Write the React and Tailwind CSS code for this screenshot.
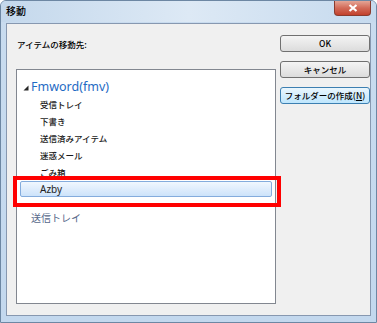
const jp = { fontFamily: '"Noto Sans CJK JP", "Noto Sans", sans-serif' };

const FolderItem = ({ children }) => (
  <div className="h-[17px] pl-[23px] flex items-center text-[8.5px] font-medium text-[#1a1a1a]">{children}</div>
);

const DialogButton = ({ children, focused }) => (
  <div
    className={
      'h-[17px] w-[90px] flex items-center justify-center rounded-[3px] border text-[8.5px] font-medium text-black ' +
      (focused
        ? 'border-[#3c7fb1] bg-gradient-to-b from-[#eaf6fd] to-[#bee6fd]'
        : 'border-[#707070] bg-gradient-to-b from-[#f4f4f4] to-[#dcdcdc]')
    }
  >
    {children}
  </div>
);

export default function App() {
  return (
    <div
      className="relative w-[377px] h-[323px] flex flex-col bg-gradient-to-b from-[#c9dcef] to-[#c3d8ee] border border-[#6d87a3] rounded-t-[6px] overflow-hidden"
      style={jp}
    >
      {/* Title bar */}
      <div className="h-[21px] flex items-start justify-between bg-gradient-to-r from-[#c4d8ec] via-[#dde9f5] to-[#c6daee]">
        <div className="pl-[5px] pt-[4px] text-[10px] leading-[12px] font-medium text-black">移動</div>
        <div className="mr-[5px] w-[37px] h-[15px] rounded-b-[4px] border border-t-0 border-[#8a3b2e] bg-gradient-to-b from-[#e4a596] via-[#d26a58] to-[#c2402c] flex items-center justify-center">
          <svg width="10" height="8" viewBox="0 0 10 8">
            <path d="M1.5 1 L8.5 7 M8.5 1 L1.5 7" stroke="#fff" strokeWidth="2.2" />
          </svg>
        </div>
      </div>

      {/* Content panel */}
      <div className="flex-1 mx-[5px] mt-[1px] mb-[6px] border border-[#8798b0] bg-[#f0f0f0] flex">
        <div className="pl-[9px] pt-[12px] flex flex-col">
          <div className="h-[16px] flex items-center pl-[1px] text-[8.5px] font-medium text-black">アイテムの移動先:</div>
          <div className="mt-[17px] w-[260px] h-[235px] border border-[#828790] bg-white pt-[9px]">
            <div className="h-[17px] flex items-center pl-[6px]">
              <svg width="6" height="6" viewBox="0 0 6 6" className="mr-[2px]">
                <path d="M5.5 0.5 L5.5 5.5 L0.5 5.5 Z" fill="#262626" />
              </svg>
              <span className="text-[12.5px] text-[#1f6bc4]" style={{ fontFamily: '"Noto Sans", sans-serif' }}>
                Fmword(fmv)
              </span>
            </div>
            <FolderItem>受信トレイ</FolderItem>
            <FolderItem>下書き</FolderItem>
            <FolderItem>送信済みアイテム</FolderItem>
            <FolderItem>迷惑メール</FolderItem>
            <FolderItem>ごみ箱</FolderItem>
            <div className="ml-[3px] w-[252px] h-[16px] rounded-[2px] border border-[#84acdd] bg-gradient-to-b from-[#f1f7fe] to-[#cde3fa] flex items-center pl-[19px]">
              <span className="text-[10px] text-[#222]" style={{ fontFamily: '"Noto Sans", sans-serif' }}>Azby</span>
            </div>
            <div className="mt-[10px] h-[20px] flex items-center pl-[14px] text-[10px] text-[#56688a]">送信トレイ</div>
          </div>
        </div>

        <div className="ml-[4px] pt-[11px] flex flex-col gap-[9px]">
          <DialogButton>OK</DialogButton>
          <DialogButton>キャンセル</DialogButton>
          <DialogButton focused>
            フォルダーの作成(<span className="underline">N</span>)
          </DialogButton>
        </div>
      </div>

      {/* Red highlight */}
      <div className="absolute left-[12px] top-[175px] w-[268px] h-[31px] border-[4px] border-[#ff0000]" />
    </div>
  );
}
